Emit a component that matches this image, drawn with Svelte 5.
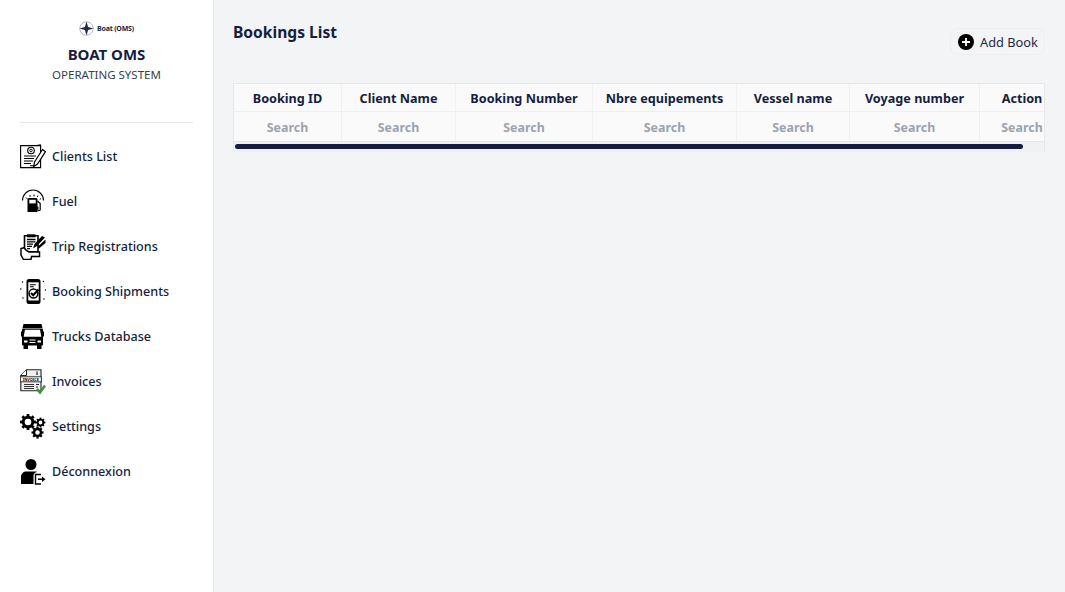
<script>
  const columns = ['Booking ID', 'Client Name', 'Booking Number', 'Nbre equipements', 'Vessel name', 'Voyage number', 'Action'];
  const widths = [108, 114, 137, 144, 113, 130, 85];
  const navItems = ['Clients List', 'Fuel', 'Trip Registrations', 'Booking Shipments', 'Trucks Database', 'Invoices', 'Settings', 'Déconnexion'];
</script>

{#snippet gear(cx, cy, r, band, teeth, size)}
  <circle {cx} {cy} r={r - band / 2} fill="none" stroke="#000" stroke-width={band} />
  {#each Array(teeth) as _, i}
    <rect x={cx - size / 2} y={cy - r - size * 0.6} width={size} height={size} fill="#000" transform="rotate({(360 / teeth) * i} {cx} {cy})" />
  {/each}
{/snippet}

{#snippet icon(index)}
  <svg class="icon" viewBox="0 0 26 26" aria-hidden="true">
    {#if index === 0}
      <path d="M.6 1.600H20.600V23.600H.6z" fill="#fff" stroke="#000" stroke-width="1.100" />
      <path d="M16 1.600l4.600-1v5" fill="none" stroke="#000" stroke-width=".8" />
      <circle cx="11" cy="6.500" r="3.300" fill="none" stroke="#000" stroke-width="1.100" />
      <circle cx="11" cy="6.500" r="1.300" fill="none" stroke="#000" stroke-width=".9" />
      <path d="M4 12h12M4 14.500h10M4 17h9M4 19.500h7M10 21.800h4" stroke="#000" stroke-width="1.100" />
      <path d="M22.500 5.500l3 2.200-8 12.300-3.800 2.500.8-4.500z" fill="#fff" stroke="#000" stroke-width="1.200" />
    {:else if index === 1}
      <path d="M2.500 11.500A10.500 10.500 0 0 1 23.500 11.500" fill="none" stroke="#000" stroke-width="1.200" />
      <path d="M6 8.500l1.300 1.300M10 6v1.800M14 5.500v2M18 6.500l-.8 1.600M21 9.500l-1.300 1" stroke="#000" stroke-width="1" />
      <path d="M7.500 10.500c0-1 .8-1.500 1.700-1.500h6.600c.9 0 1.700.5 1.700 1.500V23h-10z" fill="#000" />
      <rect x="9.300" y="10.800" width="6.400" height="3.600" fill="#fff" />
      <path d="M17.500 12l2.700 2.500v6c0 1.600-2.400 1.600-2.400 0v-3" fill="none" stroke="#000" stroke-width="1.200" />
    {:else if index === 2}
      <path d="M4.500 1.800h13.500v16h-13.500z" fill="#fff" stroke="#000" stroke-width="1.600" />
      <rect x="7" y=".3" width="8.500" height="3" fill="#000" />
      <path d="M7 5.500h8.500M7 7.800h8.500M7 10.100h6M7 12.400h5M7 14.700h3" stroke="#000" stroke-width="1.300" />
      <path d="M25 3.500l-3-1.500-7.500 8-1.500 4.500 4-2.500z" fill="#000" />
      <path d="M25.500 5.500l-8 7.500 1.500 1.500 6.500-5.500z" fill="#000" />
      <path d="M1 14.500v6.500l2.500 4.500h7.500l.5-3h8v-4.500h-10.500l-3-1.800-2-2.500z" fill="#fff" stroke="#000" stroke-width="1.500" />
      <path d="M11 22.500h5" stroke="#000" stroke-width="1.200" />
    {:else if index === 3}
      <rect x="6.500" y="0" width="14" height="25" rx="2.500" fill="#000" />
      <rect x="8.300" y="3.300" width="10.400" height="18.200" fill="#fff" />
      <path d="M9.800 5.800h6M9.800 7.800h4" stroke="#000" stroke-width="1.100" />
      <circle cx="13.500" cy="14.500" r="4.400" fill="none" stroke="#000" stroke-width="1.500" />
      <path d="M11 14l2.200 2.300 5.300-5.800" fill="none" stroke="#000" stroke-width="2.100" />
      <path d="M2.500 3v.1M.8 10v.1M3 19v.1M23.500 2.500v.1M25.500 11v.1M24 20v.1" stroke="#000" stroke-width="1.500" stroke-linecap="round" />
    {:else if index === 4}
      <path d="M3.500 0h18l1 4H2.500z" fill="#000" />
      <rect x="2" y="4.500" width="21" height="17" rx="1" fill="#000" />
      <path d="M5 5.800h15l1.300 7H3.700z" fill="#fff" />
      <path d="M1 7.500h1v5H1zM23 7.500h1v5h-1z" fill="#000" />
      <path d="M4 16.500h3.500v2H4zM17.500 16.500h3.500v2h-3.500zM9.500 15.500h6v1h-6zM9.500 18h6v1h-6z" fill="#fff" />
      <path d="M3.500 21h4.500v4H3.500zM17 21h4.500v4H17z" fill="#000" />
    {:else if index === 5}
      <path d="M6.500.8h14.500v21H.8V6.500z" fill="#eef0f1" stroke="#222" stroke-width="1.100" />
      <path d="M.8 6.500h5.700V.8" fill="#fff" stroke="#222" stroke-width="1" />
      <rect x=".3" y="7.800" width="21" height="5" fill="#fff" stroke="#222" stroke-width=".9" />
      <text x="10.800" y="11.800" class="mini">INVOICE</text>
      <path d="M4 15.500h10M4 17.500h10M4 19.500h10" stroke="#333" stroke-width="1.100" />
      <path d="M17 2.500v3.500M16 15.500h3M16 18h2" stroke="#222" stroke-width="1.200" />
      <path d="M17 20l3 3.500 5-7" fill="none" stroke="#3f9142" stroke-width="2.600" />
    {:else if index === 6}
      {@render gear(8, 8, 6.300, 3, 8, 2.800)}
      {@render gear(20.500, 8.500, 3.800, 1.900, 8, 1.800)}
      {@render gear(17.500, 18.500, 4.700, 2.400, 8, 2.200)}
    {:else}
      <circle cx="11" cy="5.500" r="5.500" fill="#000" />
      <path d="M1 25v-7c0-3.500 2.500-5.500 5.500-5.500h8.500c.8 0 1.500.1 2.100.5-2.600.6-3.600 2-3.600 4V25z" fill="#000" />
      <path d="M21 15.500h-5.500v9.500h5.500" fill="none" stroke="#000" stroke-width="1.400" />
      <path d="M18 20.200h5" stroke="#000" stroke-width="1.500" />
      <path d="M22 17.400l3.500 2.800-3.500 2.800z" fill="#000" />
    {/if}
  </svg>
{/snippet}

<div class="layout">
  <aside class="sidebar">
    <div class="brand">
      <div class="logo">
        <svg viewBox="0 0 16 16" aria-hidden="true">
          <circle cx="8" cy="8" r="7.200" fill="none" stroke="#8a93a8" stroke-width=".7" />
          <path d="M8 .5l1.700 5.800 5.800 1.700-5.800 1.700L8 15.500 6.300 9.700.5 8l5.800-1.700z" fill="#1b2a52" />
        </svg>
        <span>Boat (OMS)</span>
      </div>
      <div class="name">BOAT OMS</div>
      <div class="tagline">OPERATING SYSTEM</div>
    </div>
    <hr />
    <nav>
      {#each navItems as label, i}
        <div class="item">
          {@render icon(i)}
          <span>{label}</span>
        </div>
      {/each}
    </nav>
  </aside>

  <main>
    <div class="top">
      <h1>Bookings List</h1>
      <button type="button">
        <svg viewBox="0 0 16 16" aria-hidden="true">
          <circle cx="8" cy="8" r="8" fill="#000" />
          <path d="M8 4v8M4 8h8" stroke="#fff" stroke-width="1.800" />
        </svg>
        Add Book
      </button>
    </div>

    <div class="table-wrap">
      <div class="table-clip">
        <table>
          <colgroup>
            {#each widths as w}
              <col style="width: {w}px" />
            {/each}
          </colgroup>
          <thead>
            <tr>
              {#each columns as c}
                <th>{c}</th>
              {/each}
            </tr>
            <tr>
              {#each columns as c}
                <td>Search</td>
              {/each}
            </tr>
          </thead>
        </table>
      </div>
      <div class="track"><div class="thumb"></div></div>
    </div>
  </main>
</div>

<style>
  :global(body) {
    margin: 0;
    background: #f3f4f6;
  }
  .layout {
    display: flex;
    height: 592px;
    overflow: hidden;
    font-family: "Noto Sans", "Open Sans", sans-serif;
    color: #161e40;
  }
  .sidebar {
    width: 214px;
    flex: none;
    box-sizing: border-box;
    background: #fff;
    border-right: 1px solid #e5e7eb;
    padding: 0 20px;
  }
  .brand {
    height: 122px;
    padding-top: 19px;
    box-sizing: border-box;
    text-align: center;
  }
  .logo {
    display: flex;
    align-items: center;
    justify-content: center;
    gap: 3px;
    height: 18px;
    font-size: 7px;
    font-weight: 700;
    letter-spacing: -0.2px;
  }
  .logo svg {
    width: 15px;
    height: 15px;
  }
  .name {
    margin-top: 7px;
    font-size: 15px;
    font-weight: 700;
    line-height: 20px;
  }
  .tagline {
    font-size: 11.500px;
    line-height: 18px;
    margin-top: 2px;
    color: #374151;
  }
  hr {
    margin: 0;
    border: 0;
    border-top: 1px solid #e5e7eb;
  }
  nav {
    margin-top: 11px;
  }
  .item {
    display: flex;
    align-items: center;
    gap: 6px;
    height: 45px;
    font-size: 12.600px;
    font-weight: 500;
  }
  .icon {
    width: 26px;
    height: 26px;
    flex: none;
  }
  .mini {
    font-size: 3.800px;
    font-weight: 700;
    text-anchor: middle;
    fill: #000;
  }
  main {
    flex: 1;
    min-width: 0;
    padding: 0 20px 0 19px;
  }
  .top {
    display: flex;
    justify-content: space-between;
    align-items: flex-start;
    height: 83px;
  }
  h1 {
    margin: 21px 0 0;
    font-size: 15.600px;
    font-weight: 700;
    line-height: 22px;
  }
  button {
    margin-top: 28px;
    height: 27px;
    width: 95px;
    display: flex;
    align-items: center;
    gap: 6px;
    padding: 0 0 0 7px;
    box-sizing: border-box;
    background: transparent;
    border: 1px solid #eceef2;
    border-radius: 8px;
    font: inherit;
    font-size: 12.800px;
    color: #1f2a44;
  }
  button svg {
    width: 16px;
    height: 16px;
  }
  .table-wrap {
    width: 812px;
    box-sizing: border-box;
    border: 1px solid #e5e7eb;
    border-width: 1px 1px 0;
    background: #fafafa;
  }
  .table-clip {
    overflow: hidden;
  }
  .track {
    height: 10px;
    padding: 2px 21px 3px 1px;
    box-sizing: border-box;
    background: #f0f1f3;
  }
  .thumb {
    height: 5px;
    border-radius: 3px;
    background: #161e40;
  }
  table {
    width: 831px;
    table-layout: fixed;
    border-collapse: separate;
    border-spacing: 0;
    font-size: 12.650px;
    text-align: center;
  }
  th,
  td {
    box-sizing: border-box;
    padding: 0;
    border-right: 1px solid #eff0f2;
    border-bottom: 1px solid #eff0f2;
  }
  th {
    height: 28px;
    font-weight: 700;
    white-space: nowrap;
  }
  td {
    height: 30px;
    padding-top: 2px;
    font-size: 12.400px;
    font-weight: 700;
    color: #9ca3af;
    border-bottom-color: #e5e7eb;
  }
</style>
